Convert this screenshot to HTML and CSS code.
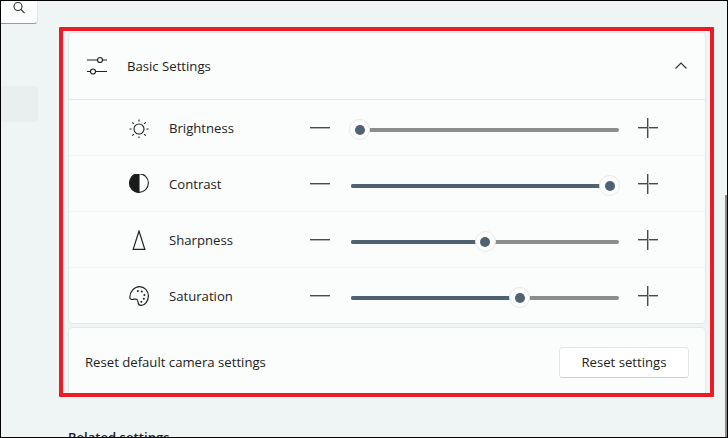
FILE: index.html

```html
<!DOCTYPE html>
<html lang="en">
<head>
  <meta charset="UTF-8">
  <title>Camera settings</title>
  <link rel="stylesheet" href="styles.css">
</head>
<body>

<div class="window">
  <!-- left nav, mostly cut off -->
  <div class="sidebar">
    <div class="search">
      <svg width="14" height="14" viewBox="0 0 14 14" fill="none" stroke="#333" stroke-width="1.1"><circle cx="6" cy="5.5" r="4"/><path d="M9 8.5l3.6 3.6"/></svg>
    </div>
    <div class="nav-item"></div>
  </div>

  <div class="main">
    <div class="card">
      <div class="card-head">
        <svg class="icon" width="20" height="20" viewBox="0 0 20 20" fill="none" stroke="#222" stroke-width="1.2"><path d="M0 4h10.500M15.500 4h4.500M0 15.500h3.500M8.500 15.500h11.500"/><circle cx="13" cy="4" r="2.500"/><circle cx="6" cy="15.500" r="2.500"/></svg>
        <span class="head-title">Basic Settings</span>
        <svg class="chevron" width="12" height="8" viewBox="0 0 12 8" fill="none" stroke="#333" stroke-width="1.2"><path d="M.5 6.500L6 1l5.500 5.500"/></svg>
      </div>

      <div class="row">
        <svg class="icon" width="20" height="20" viewBox="0 0 20 20" fill="none" stroke="#222" stroke-width="1.100"><circle cx="10" cy="11" r="5"/><path d="M10 1.500v2M10 18.500v2M.5 11h2M17.500 11h2M3.300 4.300l1.500 1.500M15.200 16.200l1.500 1.500M16.700 4.300l-1.500 1.500M4.800 16.200l-1.500 1.500"/></svg>
        <span class="label">Brightness</span>
        <span class="minus"></span>
        <div class="slider"><div class="fill" style="width: 3.54%"><span class="thumb"></span></div></div>
        <span class="plus"></span>
      </div>

      <div class="row">
        <svg class="icon" width="20" height="20" viewBox="0 0 20 20" fill="none" stroke="#222" stroke-width="1.100"><circle cx="10" cy="9" r="9.400"/><path d="M10 -.4a9.400 9.400 0 0 0 0 18.800z" fill="#1a1a1a"/></svg>
        <span class="label">Contrast</span>
        <span class="minus"></span>
        <div class="slider"><div class="fill" style="width: 96.8%"><span class="thumb"></span></div></div>
        <span class="plus"></span>
      </div>

      <div class="row">
        <svg class="icon" width="20" height="20" viewBox="0 0 20 20" fill="none" stroke="#222" stroke-width="1.200"><path d="M10 1L4.200 19.400h11.600z"/></svg>
        <span class="label">Sharpness</span>
        <span class="minus"></span>
        <div class="slider"><div class="fill" style="width: 50.2%"><span class="thumb"></span></div></div>
        <span class="plus"></span>
      </div>

      <div class="row">
        <svg class="icon" width="20" height="20" viewBox="0 0 20 20" fill="none" stroke="#222" stroke-width="1.200"><path d="M10.500 .6c5 0 8.900 4.200 8.900 9.200 0 5.200-3.600 9.600-7.200 9.600-2.200 0-3-1.500-3.200-3.300-.2-2-1.200-3.400-3.200-3-1.800.4-4.900 1.200-5-1.700C.7 6 5.300 .6 10.500 .6z"/><g fill="#222" stroke="none"><circle cx="8.800" cy="5" r="1"/><circle cx="12.800" cy="5.400" r="1"/><circle cx="15.400" cy="9" r="1"/><circle cx="14.800" cy="12.800" r="1"/><circle cx="12.400" cy="15.800" r="1"/></g></svg>
        <span class="label">Saturation</span>
        <span class="minus"></span>
        <div class="slider"><div class="fill" style="width: 63.2%"><span class="thumb"></span></div></div>
        <span class="plus"></span>
      </div>
    </div>

    <div class="card reset-card">
      <span>Reset default camera settings</span>
      <button class="reset-btn">Reset settings</button>
    </div>

    <div class="related">Related settings</div>
  </div>

  <!-- red highlight drawn over the screenshot -->
  <div class="highlight"></div>
  <div class="scrollbar"></div>
</div>

</body>
</html>
```

FILE: styles.css

```css
* {
  margin: 0;
  padding: 0;
  box-sizing: border-box;
}
body {
  font-family: "Open Sans", "Liberation Sans", sans-serif;
  font-size: 13.15px;
  color: #222;
}
.window {
  width: 728px;
  height: 438px;
  border: 1px solid #000;
  background-color: #eff4f5;
  position: relative;
  overflow: hidden;
  display: flex;
}

/* left nav */
.sidebar {
  width: 37px;
  flex-shrink: 0;
}
.search {
  height: 23px;
  background-color: #fbfcfc;
  border-right: 1px solid #e3e6e6;
  border-bottom: 1px solid #9b9b9b;
  border-bottom-right-radius: 4px;
  display: flex;
  justify-content: flex-end;
  padding: 0 11px 0 0;
}
.nav-item {
  height: 36px;
  margin-top: 62px;
  background-color: #e9eeee;
  border-radius: 0 4px 4px 0;
}

/* cards */
.main {
  width: 638px;
  margin-left: 30px;
  padding-top: 31px;
  flex-shrink: 0;
}
.card {
  background-color: #fbfcfc;
  border: 1px solid #e4e8e8;
  border-radius: 4px;
}
.card-head {
  height: 67px;
  display: flex;
  align-items: center;
  padding: 0 18px;
  border-bottom: 1px solid #e3e6e6;
}
.head-title {
  margin-left: 20px;
  flex: 1;
}
.row {
  height: 56px;
  display: flex;
  align-items: center;
  padding-left: 60px;
  border-bottom: 1px solid #f0f2f2;
}
.row:last-child {
  height: 55px;
  border-bottom: 0;
}
.label {
  width: 141px;
  margin-left: 20px;
}

/* sliders */
.minus {
  width: 20px;
  height: 1px;
  background-color: #4a4a4a;
  box-shadow: 0 1px 0 #b4b4b4;
}
.plus {
  width: 20px;
  height: 20px;
  position: relative;
}
.plus::before,
.plus::after {
  content: "";
  position: absolute;
  background-color: #4a4a4a;
}
.plus::before {
  left: 0;
  top: 9px;
  width: 20px;
  height: 1px;
  box-shadow: 0 1px 0 #b4b4b4;
}
.plus::after {
  left: 9px;
  top: 0;
  width: 1px;
  height: 20px;
  box-shadow: 1px 0 0 #b4b4b4;
}
.slider {
  width: 268px;
  height: 4px;
  margin: 5px 19px 0 21px;
  background-color: #8c8c8c;
  border-radius: 2px;
}
.fill {
  height: 100%;
  background-color: #4f6272;
  border-radius: 2px;
  position: relative;
}
.thumb {
  position: absolute;
  right: -10px;
  top: -9px;
  width: 21px;
  height: 21px;
  background-color: #fff;
  border: 1px solid #e6e9e9;
  border-radius: 50%;
}
.thumb::after {
  content: "";
  position: absolute;
  left: 4.5px;
  top: 4.5px;
  width: 10px;
  height: 10px;
  background-color: #4f6272;
  border-radius: 50%;
}

/* reset */
.reset-card {
  height: 70px;
  margin-top: 3px;
  display: flex;
  align-items: center;
  justify-content: space-between;
  padding: 0 16px;
}
.reset-btn {
  width: 130px;
  height: 31px;
  font: inherit;
  color: #222;
  background-color: #fff;
  border: 1px solid #e6e6e6;
  border-bottom-color: #cfcfcf;
  border-radius: 4px;
}
.related {
  margin-top: 31px;
  font-weight: 600;
}

/* overlays */
.highlight {
  position: absolute;
  left: 58px;
  top: 26px;
  width: 655px;
  height: 370px;
  border: 4px solid #ed1c24;
  border-radius: 1px;
}
.scrollbar {
  position: absolute;
  right: 0;
  top: 194px;
  bottom: 0;
  width: 2px;
  background-color: #8a8a8a;
}
```
